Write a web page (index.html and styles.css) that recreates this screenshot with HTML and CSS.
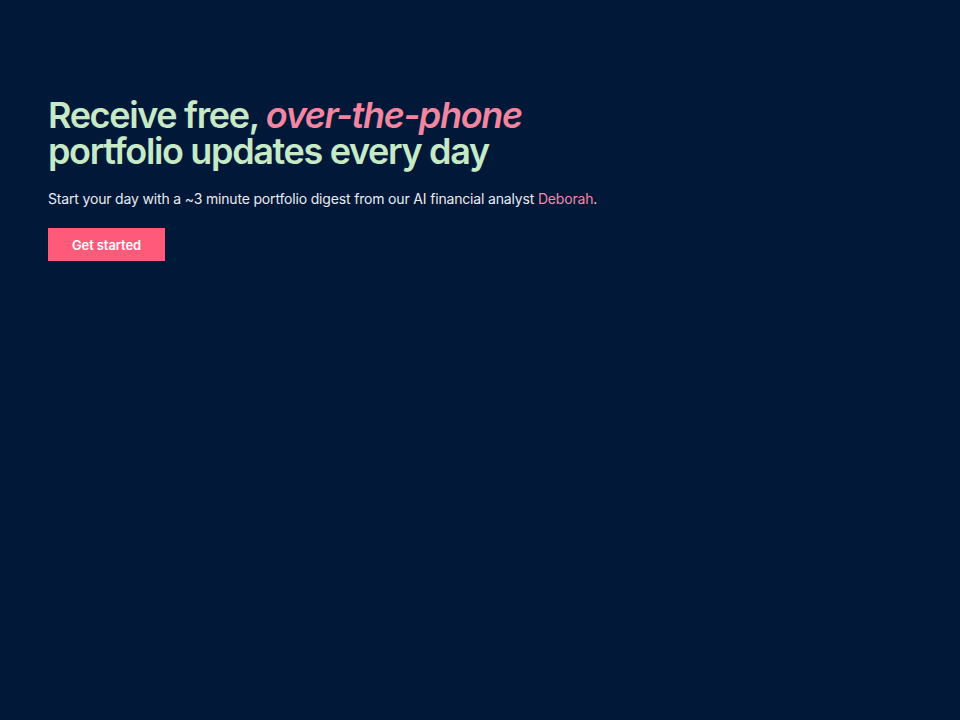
FILE: index.html
```html
<!DOCTYPE html>
<html lang="en">
<head>
<meta charset="utf-8">
<title>Portfolio updates</title>
<link rel="stylesheet" href="styles.css">
</head>
<body>
<main class="hero">
  <h1 class="title">Receive free, <em class="accent">over-the-phone</em><br>portfolio updates every day</h1>
  <p class="lead">Start your day with a ~3 minute portfolio digest from our AI financial analyst <span class="name">Deborah</span>.</p>
  <a class="cta" href="#">Get started</a>
</main>
</body>
</html>
```

FILE: styles.css
```css
html, body {
  margin: 0;
  padding: 0;
  background: #011838;
  height: 100%;
}
body {
  font-family: Inter, "Noto Sans", sans-serif;
}
.hero {
  display: flex;
  flex-direction: column;
  align-items: flex-start;
  padding: 97px 48px 0;
}
.title {
  margin: 0;
  font-size: 36px;
  line-height: 36px;
  font-weight: 600;
  letter-spacing: -1.35px;
  color: #c6e9c6;
}
.accent {
  font-style: italic;
  color: #f2859f;
}
.lead {
  margin: 20px 0 0;
  font-size: 14px;
  line-height: 20px;
  color: #e8ecf2;
  letter-spacing: -0.17px;
}
.name {
  color: #f088a6;
}
.cta {
  margin-top: 19px;
  display: inline-flex;
  align-items: center;
  justify-content: center;
  width: 117px;
  height: 33px;
  background: #ff5a7a;
  color: #fff;
  font-size: 13px;
  font-weight: 600;
  text-decoration: none;
  letter-spacing: -0.1px;
}
```
